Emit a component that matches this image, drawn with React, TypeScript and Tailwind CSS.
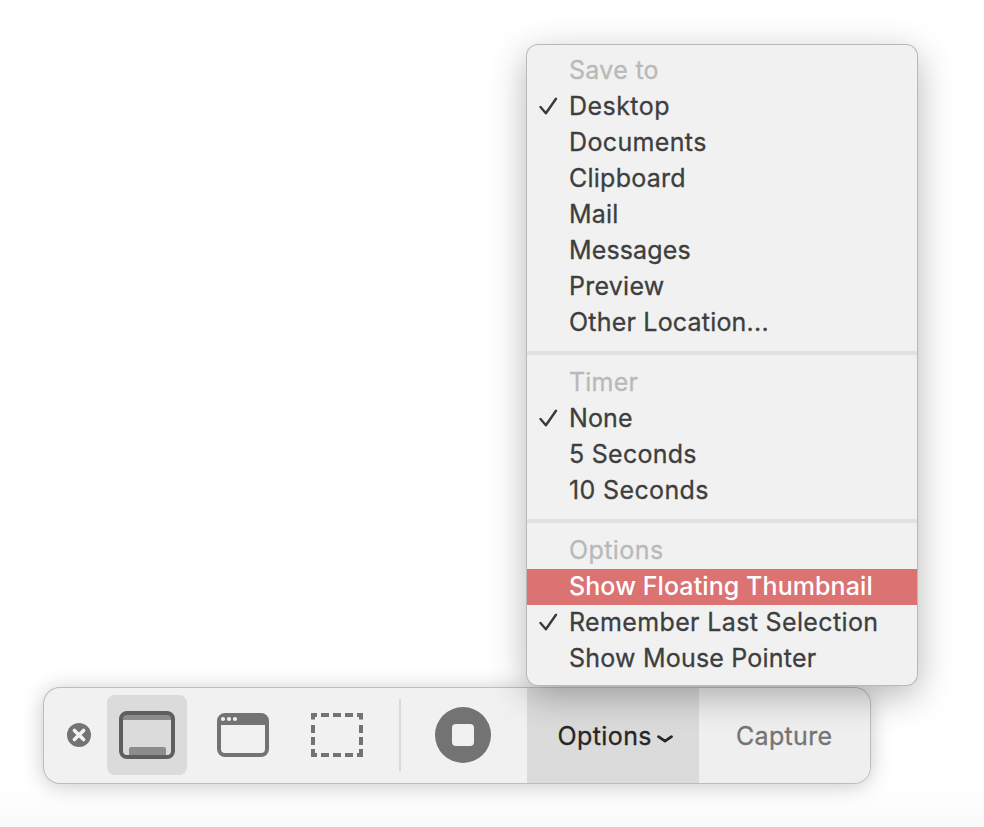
import React from "react";

type Item = { label: string; tracking: string; checked?: boolean; header?: boolean; active?: boolean };

const sections: Item[][] = [
  [
    { label: "Save to", tracking: "tracking-[0.3px]", header: true },
    { label: "Desktop", tracking: "tracking-[0.45px]", checked: true },
    { label: "Documents", tracking: "tracking-[0.36px]" },
    { label: "Clipboard", tracking: "tracking-[0.25px]" },
    { label: "Mail", tracking: "tracking-[0.15px]" },
    { label: "Messages", tracking: "tracking-[0.14px]" },
    { label: "Preview", tracking: "tracking-[0.25px]" },
    { label: "Other Location...", tracking: "tracking-[0.2px]" },
  ],
  [
    { label: "Timer", tracking: "tracking-[0.2px]", header: true },
    { label: "None", tracking: "tracking-[0.1px]", checked: true },
    { label: "5 Seconds", tracking: "tracking-[0.26px]" },
    { label: "10 Seconds", tracking: "tracking-[0.36px]" },
  ],
  [
    { label: "Options", tracking: "tracking-[0.42px]", header: true },
    { label: "Show Floating Thumbnail", tracking: "tracking-[0.09px]", active: true },
    { label: "Remember Last Selection", tracking: "tracking-[0.36px]", checked: true },
    { label: "Show Mouse Pointer", tracking: "tracking-[0.21px]" },
  ],
];

function MenuRow({ item }: { item: Item }) {
  const tone = item.header
    ? "text-[#b9b9b9] [-webkit-text-stroke:0.3px]"
    : item.active
      ? "bg-[#dc7373] text-white font-medium"
      : "text-[#3e3e3e] [-webkit-text-stroke:0.3px]";
  return (
    <div className={`flex h-9 items-center ${tone}`}>
      <div className="flex w-[42px] shrink-0 pl-3">
        {item.checked && (
          <svg width="20" height="20" viewBox="0 0 20 20" fill="none" stroke="#3a3a3a" strokeWidth="2.4" strokeLinecap="round" strokeLinejoin="round" className="-mt-0.5">
            <path d="M1.5 10.9 L6.9 17.3 L17 2.8" />
          </svg>
        )}
      </div>
      <span className={`-mt-0.5 whitespace-pre text-[25px] leading-9 ${item.tracking}`}>{item.label}</span>
    </div>
  );
}

function Menu() {
  return (
    <div className="absolute left-[527px] top-[45px] w-[390px] rounded-[11px] bg-[#f1f1f1] py-2 shadow-[0_0_0_1px_#b9b9b9,0_10px_36px_rgba(0,0,0,0.3)]">
      {sections.map((items, i) => (
        <React.Fragment key={i}>
          {i > 0 && (
            <div className="flex h-6 items-center">
              <div className="h-1 w-full bg-[#e1e1e1]" />
            </div>
          )}
          {items.map((item) => (
            <MenuRow key={item.label} item={item} />
          ))}
        </React.Fragment>
      ))}
    </div>
  );
}

function Toolbar() {
  return (
    <div className="flex h-[95px] w-[826px] overflow-hidden rounded-[16px] bg-[#f1f1f1] shadow-[0_0_0_1px_#bdbdbd,0_2px_22px_rgba(0,0,0,0.24)]">
      <div className="flex w-[63px] items-center pl-[23px]">
        <svg width="24" height="24" viewBox="0 0 24 24" className="-mt-px">
          <circle cx="12" cy="12" r="12" fill="#737373" />
          <path d="M7.4 7.4 L16.6 16.6 M16.6 7.4 L7.4 16.6" stroke="#f3f3f3" strokeWidth="3.6" strokeLinecap="round" />
        </svg>
      </div>
      <div className="mt-[7px] flex size-20 items-center justify-center rounded-[8px] bg-[#dbdbdb]">
        <svg width="56" height="48" viewBox="0 0 56 48">
          <path d="M4 4 H52 V9 H4 Z M10 38 Q10 36 12 36 H45 Q47 36 47 38 V44 H10 Z" fill="#8c8c8c" />
          <rect x="2" y="2" width="52" height="44" rx="6" fill="none" stroke="#5e5e5e" strokeWidth="4" />
        </svg>
      </div>
      <svg width="52" height="44" viewBox="0 0 52 44" className="ml-[30px] mt-[25px]">
        <rect x="2" y="2" width="48" height="40" rx="6" fill="none" stroke="#737373" strokeWidth="4" />
        <path d="M2 8 Q2 2 8 2 H44 Q50 2 50 8 V12 H2 Z" fill="#737373" />
        <circle cx="6" cy="6" r="2.1" fill="#f1f1f1" />
        <circle cx="12" cy="6" r="2.1" fill="#f1f1f1" />
        <circle cx="18" cy="6" r="2.1" fill="#f1f1f1" />
      </svg>
      <svg width="52" height="44" viewBox="0 0 52 44" fill="#737373" className="ml-[42px] mt-[25px]">
        <path d="M0 0H6V4H4V6.500H0Z M10 0H18V4H10Z M22 0H30V4H22Z M34 0H42V4H34Z M46 0H52V6.500H48V4H46Z" />
        <path d="M0 12H4V20H0Z M0 24H4V32H0Z M48 12H52V20H48Z M48 24H52V32H48Z" />
        <path d="M0 36H4V40H6V44H0Z M10 40H18V44H10Z M22 40H30V44H22Z M34 40H42V44H34Z M48 36H52V44H46V40H48Z" />
      </svg>
      <div className="ml-9 mt-[11px] h-[72px] w-[2px] bg-[#dadada]" />
      <div className="ml-[34px] mt-[19px] flex size-14 items-center justify-center rounded-full bg-[#737373]">
        <div className="size-[22px] rounded-[4px] bg-[#f1f1f1]" />
      </div>
      <div className="ml-9 flex w-[172px] items-center bg-[#dbdbdb] pl-[30.5px] text-[#262626]">
        <span className="text-[25px] leading-9 tracking-[0.4px] [-webkit-text-stroke:0.3px]">Options</span>
        <svg width="16" height="8" viewBox="0 0 16 8" fill="none" stroke="#262626" strokeWidth="2.8" strokeLinecap="round" strokeLinejoin="round" className="ml-[5px] mt-[6px] shrink-0">
          <path d="M1.500 1.700 L8 6.100 L14.500 1.700" />
        </svg>
      </div>
      <div className="flex flex-1 items-center bg-[#efefef] pl-[37px] text-[#747474]">
        <span className="text-[25px] leading-9 tracking-[0.32px] [-webkit-text-stroke:0.3px]">Capture</span>
      </div>
    </div>
  );
}

export default function App() {
  return (
    <div className="relative h-[827px] w-[984px] overflow-hidden bg-gradient-to-b from-white from-95% to-[#fafafa] pl-[44px] pt-[688px] font-['Inter','Liberation_Sans',sans-serif]">
      <Toolbar />
      <Menu />
    </div>
  );
}
